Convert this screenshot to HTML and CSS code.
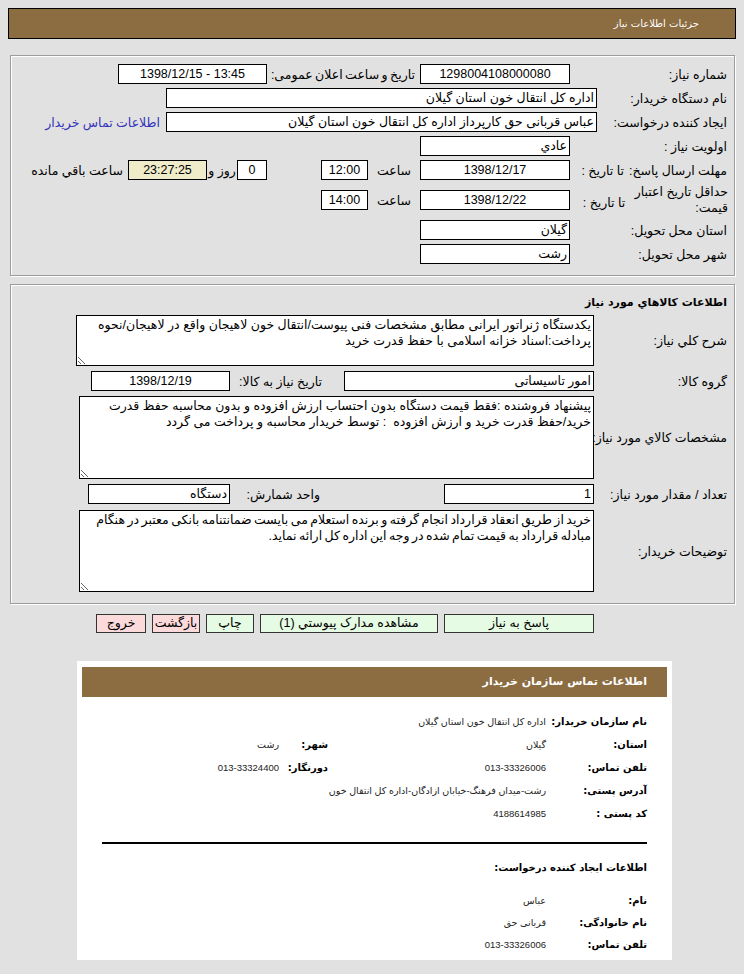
FILE: index.html
```html
<!DOCTYPE html>
<html lang="fa" dir="rtl">
<head>
<meta charset="utf-8">
<title>جزئیات اطلاعات نیاز</title>
<link rel="stylesheet" href="styles.css">
</head>
<body>
<div class="page-title">جزئیات اطلاعات نیاز</div>

<div class="panel p1">
  <div class="row">
    <div class="lbl w164">شماره نیاز:</div>
    <div class="box w150 c">1298004108000080</div>
    <div class="lbl lbl-ann">تاریخ و ساعت اعلان عمومی:</div>
    <div class="box w149 c" dir="ltr">1398/12/15 - 13:45</div>
  </div>
  <div class="row">
    <div class="lbl w137">نام دستگاه خریدار:</div>
    <div class="box w431">اداره کل انتقال خون استان گیلان</div>
  </div>
  <div class="row">
    <div class="lbl w137">ایجاد کننده درخواست:</div>
    <div class="box w431">عباس قربانی حق کارپرداز اداره کل انتقال خون استان گیلان</div>
    <a class="link" href="#">اطلاعات تماس خریدار</a>
  </div>
  <div class="row">
    <div class="lbl w164">اولویت نیاز :</div>
    <div class="box w150">عادي</div>
  </div>
  <div class="row">
    <div class="lbl w164">مهلت ارسال پاسخ:<span class="sub">تا تاریخ :</span></div>
    <div class="box w150 c">1398/12/17</div>
    <div class="mid">ساعت</div>
    <div class="box w47 c">12:00</div>
    <div class="box w30 c gap54">0</div>
    <div class="day">روز و</div>
    <div class="box w79 c beige">23:27:25</div>
    <div class="rest">ساعت باقي مانده</div>
  </div>
  <div class="row tall">
    <div class="lbl lbl-wrap">حداقل تاریخ اعتبار<br>قیمت:</div>
    <div class="sub2">تا تاریخ :</div>
    <div class="box w150 c">1398/12/22</div>
    <div class="mid">ساعت</div>
    <div class="box w47 c">14:00</div>
  </div>
  <div class="row">
    <div class="lbl w164">استان محل تحویل:</div>
    <div class="box w150">گیلان</div>
  </div>
  <div class="row">
    <div class="lbl w164">شهر محل تحویل:</div>
    <div class="box w150">رشت</div>
  </div>
</div>

<div class="panel p2">
  <div class="p2-title">اطلاعات کالاهاي مورد نياز</div>
  <div class="row r-ta1">
    <div class="lbl w140">شرح کلي نياز:</div>
    <textarea class="ta ta1" readonly>یکدستگاه ژنراتور ایرانی مطابق مشخصات فنی پیوست/انتقال خون لاهیجان واقع در لاهیجان/نحوه پرداخت:اسناد خزانه اسلامی با حفظ قدرت خرید</textarea>
  </div>
  <div class="row r-grp">
    <div class="lbl w140">گروه کالا:</div>
    <div class="box w250">امور تاسیساتی</div>
    <div class="lbl-need">تاریخ نیاز به کالا:</div>
    <div class="box w139 c">1398/12/19</div>
  </div>
  <div class="row r-ta2">
    <div class="lbl w140">مشخصات کالاي مورد نياز:</div>
    <textarea class="ta ta2" readonly>پیشنهاد فروشنده :فقط قیمت دستگاه بدون احتساب ارزش افزوده و بدون محاسبه حفظ قدرت خرید/حفظ قدرت خرید و ارزش افزوده  : توسط خریدار محاسبه و پرداخت می گردد</textarea>
  </div>
  <div class="row r-qty">
    <div class="lbl w140">تعداد / مقدار مورد نياز:</div>
    <div class="box w150">1</div>
    <div class="lbl-unit">واحد شمارش:</div>
    <div class="box w142">دستگاه</div>
  </div>
  <div class="row r-ta3">
    <div class="lbl w140">توضيحات خريدار:</div>
    <textarea class="ta ta3" readonly>خرید از طریق انعقاد قرارداد انجام گرفته و برنده استعلام می بایست ضمانتنامه بانکی معتبر در هنگام مبادله قرارداد به قیمت تمام شده در وجه این اداره کل ارائه نماید.</textarea>
  </div>
</div>

<div class="buttons">
  <button class="btn green w150">پاسخ به نياز</button>
  <button class="btn green w178">مشاهده مدارک پيوستي (1)</button>
  <button class="btn green w48">چاپ</button>
  <button class="btn pink w48">بازگشت</button>
  <button class="btn pink w50">خروج</button>
</div>

<div class="contact">
  <div class="contact-head">اطلاعات تماس سازمان خریدار</div>
  <div class="cgrid">
    <div class="cl">نام سازمان خریدار:</div>
    <div class="cv span3">اداره کل انتقال خون استان گیلان</div>

    <div class="cl">استان:</div>
    <div class="cv">گیلان</div>
    <div class="cl">شهر:</div>
    <div class="cv">رشت</div>

    <div class="cl">تلفن تماس:</div>
    <div class="cv">013-33326006</div>
    <div class="cl">دورنگار:</div>
    <div class="cv">013-33324400</div>

    <div class="cl">آدرس پستی:</div>
    <div class="cv span3">رشت-میدان فرهنگ-خیابان ازادگان-اداره کل انتقال خون</div>

    <div class="cl">کد پستی :</div>
    <div class="cv span3">4188614985</div>
  </div>
  <hr class="sep">
  <div class="csub">اطلاعات ایجاد کننده درخواست:</div>
  <div class="cgrid cgrid2">
    <div class="cl">نام:</div>
    <div class="cv span3">عباس</div>
    <div class="cl">نام خانوادگی:</div>
    <div class="cv span3">قربانی حق</div>
    <div class="cl">تلفن تماس:</div>
    <div class="cv span3">013-33326006</div>
  </div>
</div>
</body>
</html>
```

FILE: styles.css
```css
* { box-sizing: border-box; }

body {
  margin: 8px;
  background: #e1e1e1;
  font-family: "Liberation Sans", "DejaVu Sans", sans-serif;
  font-size: 12.5px;
  color: #000;
  direction: rtl;
}

.page-title {
  height: 31px;
  background: #8c6c41;
  border: 1px solid #000;
  color: #fff;
  font-family: "DejaVu Sans", sans-serif;
  font-size: 10px;
  line-height: 29px;
  padding-right: 36px;
}

.panel {
  border: 1px solid #9c9c9c;
  box-shadow: 1px 1px 0 #fff, inset 1px 1px 0 #fff;
  margin: 0 1px 0 2px;
}

.p1 { margin-top: 16px; padding: 6px 0 9px; }

.row {
  display: flex;
  align-items: center;
  padding: 2px 0;
}

.lbl {
  flex: none;
  padding-right: 7px;
  white-space: nowrap;
}

.w137 { width: 137px; }
.w140 { width: 140px; }
.w164 { width: 164px; }

.box {
  flex: none;
  height: 20px;
  border: 1px solid #000;
  background: #fff;
  line-height: 18px;
  padding: 0 2px;
  white-space: nowrap;
  overflow: hidden;
}

.c { text-align: center; }
.w30 { width: 30px; }
.w47 { width: 47px; }
.w79 { width: 79px; }
.w139 { width: 139px; }
.w142 { width: 142px; }
.w149 { width: 149px; }
.w150 { width: 150px; }
.w250 { width: 250px; }
.w431 { width: 431px; }

.beige { background: #efecca; }

.lbl-ann { width: 153px; padding-right: 5px; word-spacing: -1px; }

.link {
  margin-right: 6px;
  color: #3333bb;
  text-decoration: none;
  white-space: nowrap;
}

.sub { margin-right: 5px; }

.mid { flex: none; width: 52px; text-align: center; }
.gap54 { margin-right: 54px; }
.day { flex: none; width: 30px; text-align: center; white-space: nowrap; }
.rest { margin-right: 5px; white-space: nowrap; }

.lbl-wrap {
  width: 96px;
  line-height: 16px;
  padding-right: 6px;
}
.sub2 { flex: none; width: 68px; text-align: center; padding-top: 4px; white-space: nowrap; }

/* section 2 */
.p2 { margin-top: 8px; padding: 0 0 11px; }

.p2-title {
  font-family: "DejaVu Sans", sans-serif;
  font-weight: bold;
  font-size: 11px;
  line-height: 16px;
  padding: 10px 7px 0 0;
}

.r-ta1 { padding: 4px 0 0; }
.r-grp { padding: 5px 0 0; }
.r-ta2 { padding: 5px 0 0; }
.r-qty { padding: 5px 0 0; }
.r-ta3 { padding: 6px 0 0; }

.ta {
  flex: none;
  border: 1px solid #000;
  background: #fff;
  font-family: "Liberation Sans", "DejaVu Sans", sans-serif;
  font-size: 12.5px;
  line-height: 16px;
  padding: 1px 2px;
  color: #000;
  direction: rtl;
  resize: both;
  outline: none;
  margin: 0;
}
.ta1 { width: 518px; height: 51px; }
.ta2 { width: 515px; height: 83px; }
.ta3 { width: 515px; height: 82px; word-spacing: -1px; }

.lbl-need { flex: none; width: 114px; padding-right: 22px; white-space: nowrap; }
.lbl-unit { flex: none; width: 214px; padding-right: 124px; white-space: nowrap; }

/* buttons */
.buttons {
  display: flex;
  gap: 6px;
  padding-right: 142px;
  margin-top: 10px;
}

.btn {
  flex: none;
  height: 19px;
  border: 1px solid #333;
  font-family: "Liberation Sans", "DejaVu Sans", sans-serif;
  font-size: 12.5px;
  line-height: 17px;
  padding: 0;
  color: #000;
}
.green { background: #e6fbe3; }
.pink { background: #fcd9da; }
.btn.w48 { width: 48px; }
.btn.w50 { width: 50px; }
.btn.w150 { width: 150px; }
.btn.w178 { width: 178px; }

/* contact */
.contact {
  background: #fff;
  margin: 28px 64px 0 69px;
  padding: 6px 5px 0;
  height: 299px;
  font-family: "DejaVu Sans", sans-serif;
}

.contact-head {
  background: #8c6c41;
  height: 30px;
  color: #fff;
  font-weight: bold;
  font-size: 11px;
  line-height: 30px;
  padding-right: 20px;
}

.cgrid {
  display: grid;
  grid-template-columns: 101px 218px 49px 1fr;
  grid-auto-rows: 23px;
  align-items: center;
  padding-right: 20px;
  margin-top: 13px;
}

.cl { font-weight: bold; font-size: 10px; white-space: nowrap; }
.cv {
  font-family: "Liberation Sans", "DejaVu Sans", sans-serif;
  font-size: 9.5px;
  color: #222;
  white-space: nowrap;
}
.span3 { grid-column: span 3; }

.sep {
  border: 0;
  border-top: 2px solid #000;
  margin: 17px 20px 0 20px;
}

.csub {
  font-weight: bold;
  font-size: 10px;
  padding-right: 20px;
  margin-top: 18px;
}

.cgrid2 { margin-top: 16px; grid-auto-rows: 22px; }
```
